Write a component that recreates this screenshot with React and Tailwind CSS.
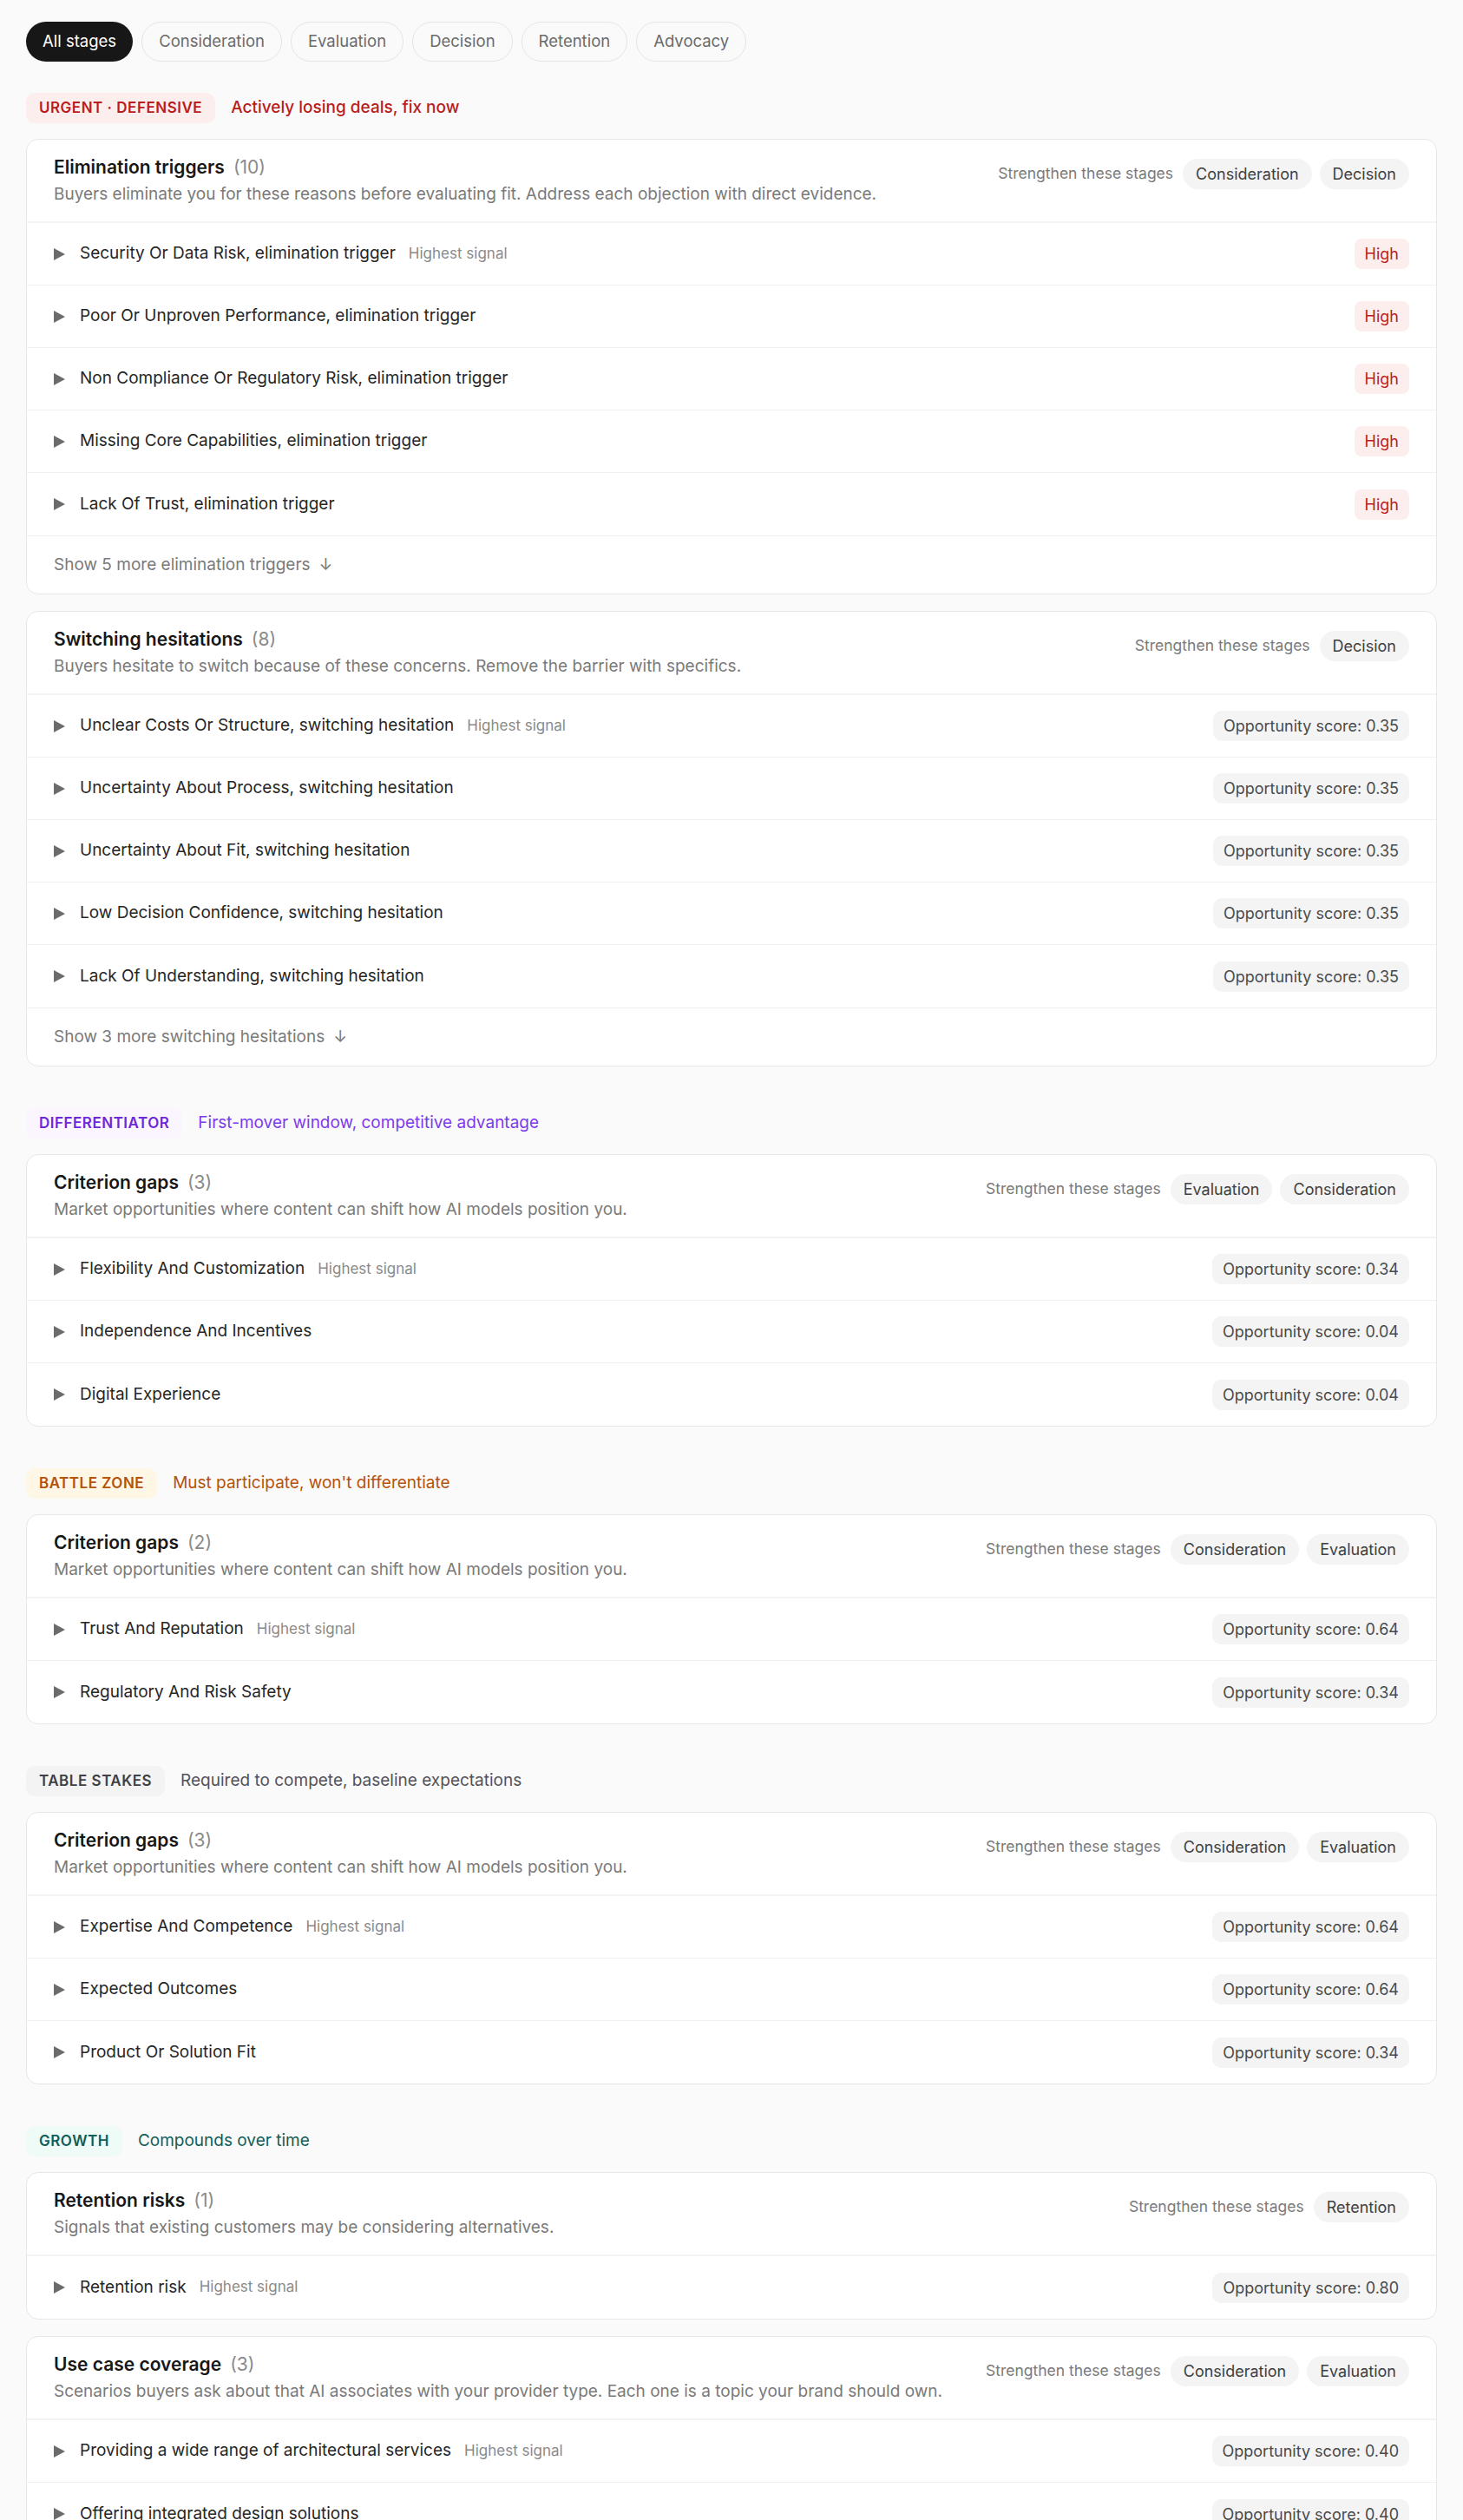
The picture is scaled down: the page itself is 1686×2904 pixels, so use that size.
import React from 'react';

const stages = ['All stages', 'Consideration', 'Evaluation', 'Decision', 'Retention', 'Advocacy'];

const sections = [
    {
        label: 'URGENT · DEFENSIVE',
        note: 'Actively losing deals, fix now',
        badge: 'bg-[#fdeeee] text-[#b91c1c]',
        noteColor: 'text-[#b91c1c] font-medium',
        cards: [
            {
                title: 'Elimination triggers',
                count: 10,
                desc: 'Buyers eliminate you for these reasons before evaluating fit. Address each objection with direct evidence.',
                stages: ['Consideration', 'Decision'],
                items: [
                    'Security Or Data Risk, elimination trigger',
                    'Poor Or Unproven Performance, elimination trigger',
                    'Non Compliance Or Regulatory Risk, elimination trigger',
                    'Missing Core Capabilities, elimination trigger',
                    'Lack Of Trust, elimination trigger'
                ].map(name => ({ name, high: true })),
                more: 'Show 5 more elimination triggers'
            },
            {
                title: 'Switching hesitations',
                count: 8,
                desc: 'Buyers hesitate to switch because of these concerns. Remove the barrier with specifics.',
                stages: ['Decision'],
                items: [
                    'Unclear Costs Or Structure, switching hesitation',
                    'Uncertainty About Process, switching hesitation',
                    'Uncertainty About Fit, switching hesitation',
                    'Low Decision Confidence, switching hesitation',
                    'Lack Of Understanding, switching hesitation'
                ].map(name => ({ name, score: '0.35' })),
                more: 'Show 3 more switching hesitations'
            }
        ]
    },
    {
        label: 'DIFFERENTIATOR',
        note: 'First-mover window, competitive advantage',
        badge: 'bg-[#faf5ff] text-[#6d28d9]',
        noteColor: 'text-[#7c3aed]',
        cards: [
            {
                title: 'Criterion gaps',
                count: 3,
                desc: 'Market opportunities where content can shift how AI models position you.',
                stages: ['Evaluation', 'Consideration'],
                items: [
                    { name: 'Flexibility And Customization', score: '0.34' },
                    { name: 'Independence And Incentives', score: '0.04' },
                    { name: 'Digital Experience', score: '0.04' }
                ]
            }
        ]
    },
    {
        label: 'BATTLE ZONE',
        note: "Must participate, won't differentiate",
        badge: 'bg-[#fef7e6] text-[#b45309]',
        noteColor: 'text-[#b45309]',
        cards: [
            {
                title: 'Criterion gaps',
                count: 2,
                desc: 'Market opportunities where content can shift how AI models position you.',
                stages: ['Consideration', 'Evaluation'],
                items: [
                    { name: 'Trust And Reputation', score: '0.64' },
                    { name: 'Regulatory And Risk Safety', score: '0.34' }
                ]
            }
        ]
    },
    {
        label: 'TABLE STAKES',
        note: 'Required to compete, baseline expectations',
        badge: 'bg-[#f3f3f3] text-[#3f3f46]',
        noteColor: 'text-[#52525b]',
        cards: [
            {
                title: 'Criterion gaps',
                count: 3,
                desc: 'Market opportunities where content can shift how AI models position you.',
                stages: ['Consideration', 'Evaluation'],
                items: [
                    { name: 'Expertise And Competence', score: '0.64' },
                    { name: 'Expected Outcomes', score: '0.64' },
                    { name: 'Product Or Solution Fit', score: '0.34' }
                ]
            }
        ]
    },
    {
        label: 'GROWTH',
        note: 'Compounds over time',
        badge: 'bg-[#effbf7] text-[#115e59]',
        noteColor: 'text-[#115e59]',
        cards: [
            {
                title: 'Retention risks',
                count: 1,
                desc: 'Signals that existing customers may be considering alternatives.',
                stages: ['Retention'],
                items: [{ name: 'Retention risk', score: '0.80' }]
            },
            {
                title: 'Use case coverage',
                count: 3,
                desc: 'Scenarios buyers ask about that AI associates with your provider type. Each one is a topic your brand should own.',
                stages: ['Consideration', 'Evaluation'],
                items: [
                    { name: 'Providing a wide range of architectural services', score: '0.40' },
                    { name: 'Offering integrated design solutions', score: '0.40' }
                ]
            }
        ]
    }
];

const Triangle = () => (
    <svg width="13" height="14" viewBox="0 0 13 14" className="shrink-0">
        <path d="M0 0 L13 7 L0 14 Z" fill="#6b6b6b" />
    </svg>
);

const Row = ({ item, first }) => (
    <div className="flex items-center justify-between h-[72px] px-[31px] border-b border-[#f0f0f0] last:border-b-0">
        <div className="flex items-center">
            <Triangle />
            <span className="ml-[17px] text-[19px] text-[#262626]">{item.name}</span>
            {first && <span className="ml-[15px] text-[17px] text-[#8a8a8a]">Highest signal</span>}
        </div>
        {item.high ? (
            <span className="h-[35px] flex items-center px-[12px] rounded-[8px] bg-[#fdeeee] text-[18px] text-[#b91c1c]">High</span>
        ) : (
            <span className="h-[35px] flex items-center px-[12px] rounded-[10px] bg-[#f4f4f4] text-[18px] text-[#4a4a4a]">
                Opportunity score: {item.score}
            </span>
        )}
    </div>
);

const Card = ({ card }) => (
    <div className="bg-white border border-[#e7e7e7] rounded-[14px] overflow-hidden">
        <div className="flex justify-between items-start px-[31px] pt-[19px] pb-[17px] border-b-2 border-[#f3f3f3]">
            <div>
                <div className="text-[21px] leading-[26px]">
                    <span className="font-semibold text-[#171717]">{card.title}</span>
                    <span className="ml-[10px] text-[#8a8a8a]">({card.count})</span>
                </div>
                <p className="mt-1 text-[19px] leading-[28px] text-[#7a7a7a]">{card.desc}</p>
            </div>
            <div className="flex items-center gap-[9px] mt-[3px] shrink-0">
                <span className="mr-[2px] text-[17.5px] text-[#7a7a7a]">Strengthen these stages</span>
                {card.stages.map(s => (
                    <span key={s} className="h-[35px] flex items-center px-[15px] rounded-full bg-[#f4f4f4] text-[18px] text-[#404040]">
                        {s}
                    </span>
                ))}
            </div>
        </div>
        <div>
            {card.items.map((item, i) => (
                <Row key={item.name} item={item} first={i === 0} />
            ))}
        </div>
        {card.more && (
            <div className="h-[67px] flex items-center px-[31px] border-t border-[#f0f0f0] text-[19px] text-[#7a7a7a]">
                {card.more}
                <span className="ml-[10px]">↓</span>
            </div>
        )}
    </div>
);

const App = () => {
    return (
        <div className="min-h-screen bg-[#fafafa] px-[30px] pt-[25px] pb-10" style={{ fontFamily: 'Inter, "Noto Sans", sans-serif' }}>
            <div className="flex gap-[10px]">
                {stages.map((s, i) => (
                    <button
                        key={s}
                        className={
                            i === 0
                                ? 'h-[46px] px-[19px] rounded-full bg-[#171717] text-white text-[18.5px]'
                                : 'h-[46px] px-[19px] rounded-full border border-[#e5e5e5] text-[#6b6b6b] text-[18.5px]'
                        }
                    >
                        {s}
                    </button>
                ))}
            </div>
            <div className="mt-[36px] flex flex-col gap-[48px]">
                {sections.map(sec => (
                    <div key={sec.label} className="flex flex-col gap-[18px]">
                        <div className="flex items-center gap-[18px]">
                            <span className={`h-[35px] flex items-center px-[15px] rounded-[10px] text-[17px] font-semibold tracking-[0.03em] ${sec.badge}`}>
                                {sec.label}
                            </span>
                            <span className={`text-[19px] ${sec.noteColor}`}>{sec.note}</span>
                        </div>
                        <div className="flex flex-col gap-[19px]">
                            {sec.cards.map(card => (
                                <Card key={card.title} card={card} />
                            ))}
                        </div>
                    </div>
                ))}
            </div>
        </div>
    );
};

export default App;
